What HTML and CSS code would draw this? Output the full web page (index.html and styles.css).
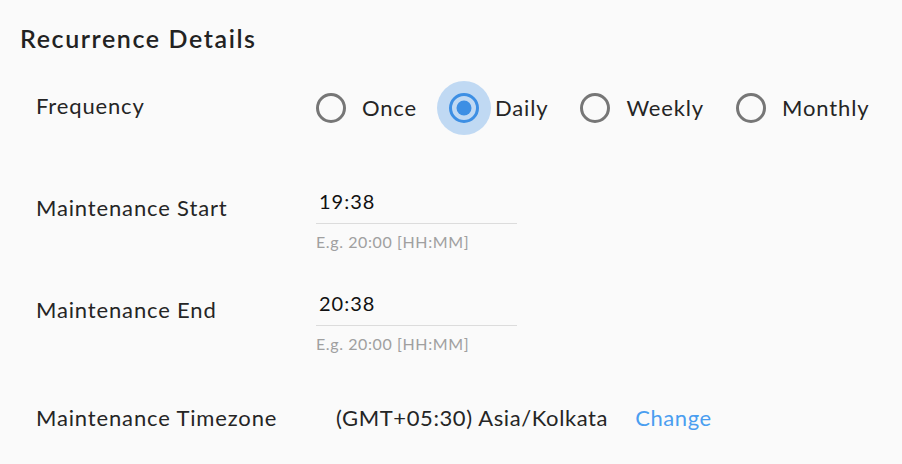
FILE: index.html
```html
<!DOCTYPE html>
<html lang="en">
<head>
<meta charset="utf-8">
<title>Recurrence Details</title>
<link rel="stylesheet" href="styles.css">
</head>
<body>
<section class="panel">
  <h2 class="title">Recurrence Details</h2>

  <div class="row row-frequency">
    <div class="label">Frequency</div>
    <div class="radio-group">
      <label class="option">
        <span class="radio">
          <svg viewBox="0 0 24 24" width="36" height="36"><circle cx="12" cy="12" r="9" fill="none" stroke="currentColor" stroke-width="2"/></svg>
        </span>
        <span class="option-text">Once</span>
      </label>
      <label class="option">
        <span class="radio checked">
          <svg viewBox="0 0 24 24" width="36" height="36"><circle cx="12" cy="12" r="9" fill="none" stroke="currentColor" stroke-width="2"/><circle cx="12" cy="12" r="5" fill="currentColor"/></svg>
        </span>
        <span class="option-text">Daily</span>
      </label>
      <label class="option">
        <span class="radio">
          <svg viewBox="0 0 24 24" width="36" height="36"><circle cx="12" cy="12" r="9" fill="none" stroke="currentColor" stroke-width="2"/></svg>
        </span>
        <span class="option-text">Weekly</span>
      </label>
      <label class="option">
        <span class="radio">
          <svg viewBox="0 0 24 24" width="36" height="36"><circle cx="12" cy="12" r="9" fill="none" stroke="currentColor" stroke-width="2"/></svg>
        </span>
        <span class="option-text">Monthly</span>
      </label>
    </div>
  </div>

  <div class="row row-time">
    <div class="label label-time">Maintenance Start</div>
    <div class="field">
      <div class="input">19:38</div>
      <div class="helper">E.g. 20:00 [HH:MM]</div>
    </div>
  </div>

  <div class="row row-time row-end">
    <div class="label label-time">Maintenance End</div>
    <div class="field">
      <div class="input">20:38</div>
      <div class="helper">E.g. 20:00 [HH:MM]</div>
    </div>
  </div>

  <div class="row row-zone">
    <div class="label">Maintenance Timezone</div>
    <div class="zone">
      <span class="zone-value">(GMT+05:30) Asia/Kolkata</span>
      <a class="change" href="#">Change</a>
    </div>
  </div>
</section>
</body>
</html>
```

FILE: styles.css
```css
html, body {
  margin: 0;
  padding: 0;
  background: #fafafa;
}

body {
  font-family: "Lato", "Open Sans", sans-serif;
  color: #222;
  width: 902px;
  height: 464px;
  overflow: hidden;
}

.panel {
  padding: 23px 0 0 20px;
}

.title {
  margin: 0;
  font-size: 25px;
  line-height: 30px;
  font-weight: 600;
  letter-spacing: 1.6px;
  color: #222;
}

.row {
  display: grid;
  grid-template-columns: 280px 1fr;
  padding-left: 16px;
}

.label {
  font-size: 22px;
  line-height: 24px;
  letter-spacing: 0.85px;
  color: #252525;
}

.row-frequency {
  margin-top: 28px;
  align-items: center;
}

.row-frequency .label {
  margin-top: -4px;
}

.radio-group {
  display: flex;
  align-items: center;
  margin-left: -12px;
}

.option {
  display: inline-flex;
  align-items: center;
  margin-right: 20px;
  cursor: pointer;
}

.radio {
  display: inline-flex;
  padding: 9px;
  border-radius: 50%;
  color: #767676;
}

.radio svg {
  display: block;
}

.radio.checked {
  color: #3d8fe4;
  background: rgba(61, 143, 228, 0.3);
}

.option-text {
  font-size: 22px;
  line-height: 24px;
  letter-spacing: 0.85px;
  color: #252525;
  margin-left: 4px;
}

.row-time {
  margin-top: 48px;
}

.row-end {
  margin-top: 33px;
}

.label-time {
  padding-top: 13px;
}

.field {
  width: 201px;
}

.input {
  font-size: 20px;
  line-height: 24px;
  letter-spacing: 1px;
  color: #111;
  padding: 6px 0 10px 3px;
  border-bottom: 1px solid #dcdcdc;
}

.helper {
  margin-top: 8px;
  font-size: 16px;
  line-height: 20px;
  letter-spacing: 0.6px;
  color: #a0a0a0;
}

.row-zone {
  margin-top: 52px;
}

.zone {
  display: flex;
  align-items: baseline;
  padding-left: 20px;
  font-size: 22px;
  line-height: 24px;
  letter-spacing: 0.6px;
}

.zone-value {
  color: #252525;
}

.change {
  margin-left: 27px;
  color: #4a9ef0;
  text-decoration: none;
}
```
